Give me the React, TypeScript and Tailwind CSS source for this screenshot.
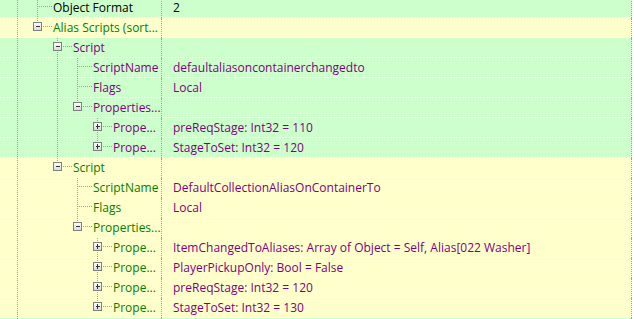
import React from 'react';

type Kind = 'leaf' | 'minus' | 'plus';

type Row = {
  label: string;
  value?: string;
  bg: 'green' | 'yellow';
  labelColor: string;
  valueColor?: string;
  x: number;
  kind: Kind;
  last?: boolean;
  lines: number[];
};

const PURPLE = 'text-[#800080]';
const GREEN = 'text-[#008000]';
const BLACK = 'text-black';

const rows: Row[] = [
  { label: 'Object Format', value: '2', bg: 'green', labelColor: BLACK, valueColor: BLACK, x: 37, kind: 'leaf', lines: [17] },
  { label: 'Alias Scripts (sort...', bg: 'yellow', labelColor: GREEN, x: 37, kind: 'minus', last: true, lines: [17] },
  { label: 'Script', bg: 'green', labelColor: PURPLE, x: 57, kind: 'minus', lines: [17] },
  { label: 'ScriptName', value: 'defaultaliasoncontainerchangedto', bg: 'green', labelColor: PURPLE, valueColor: PURPLE, x: 77, kind: 'leaf', lines: [17, 57] },
  { label: 'Flags', value: 'Local', bg: 'green', labelColor: PURPLE, valueColor: PURPLE, x: 77, kind: 'leaf', lines: [17, 57] },
  { label: 'Properties...', bg: 'green', labelColor: PURPLE, x: 77, kind: 'minus', last: true, lines: [17, 57] },
  { label: 'Prope...', value: 'preReqStage: Int32 = 110', bg: 'green', labelColor: PURPLE, valueColor: PURPLE, x: 97, kind: 'plus', lines: [17, 57] },
  { label: 'Prope...', value: 'StageToSet: Int32 = 120', bg: 'green', labelColor: PURPLE, valueColor: PURPLE, x: 97, kind: 'plus', last: true, lines: [17, 57] },
  { label: 'Script', bg: 'yellow', labelColor: GREEN, x: 57, kind: 'minus', last: true, lines: [17] },
  { label: 'ScriptName', value: 'DefaultCollectionAliasOnContainerTo', bg: 'yellow', labelColor: GREEN, valueColor: PURPLE, x: 77, kind: 'leaf', lines: [17] },
  { label: 'Flags', value: 'Local', bg: 'yellow', labelColor: GREEN, valueColor: PURPLE, x: 77, kind: 'leaf', lines: [17] },
  { label: 'Properties...', bg: 'yellow', labelColor: GREEN, x: 77, kind: 'minus', last: true, lines: [17] },
  { label: 'Prope...', value: 'ItemChangedToAliases: Array of Object = Self, Alias[022 Washer]', bg: 'yellow', labelColor: GREEN, valueColor: PURPLE, x: 97, kind: 'plus', lines: [17] },
  { label: 'Prope...', value: 'PlayerPickupOnly: Bool = False', bg: 'yellow', labelColor: GREEN, valueColor: PURPLE, x: 97, kind: 'plus', lines: [17] },
  { label: 'Prope...', value: 'preReqStage: Int32 = 120', bg: 'yellow', labelColor: GREEN, valueColor: PURPLE, x: 97, kind: 'plus', lines: [17] },
  { label: 'Prope...', value: 'StageToSet: Int32 = 130', bg: 'yellow', labelColor: GREEN, valueColor: PURPLE, x: 97, kind: 'plus', last: true, lines: [17] },
];

const DOT = '#a0a0a0';
const CY = 8.5;

function Connectors({ row }: { row: Row }) {
  const { x, kind, last, lines } = row;
  const hasBox = kind !== 'leaf';
  return (
    <svg width={x + 16} height={20} className="shrink-0" shapeRendering="crispEdges">
      {lines.map((l) => (
        <line key={l} x1={l + 0.5} y1={0} x2={l + 0.5} y2={20} stroke={DOT} strokeDasharray="1 1" />
      ))}
      <line x1={x + 0.5} y1={0} x2={x + 0.5} y2={last ? CY : 20} stroke={DOT} strokeDasharray="1 1" />
      <line x1={hasBox ? x + 6 : x + 2} y1={CY} x2={x + 15} y2={CY} stroke={DOT} strokeDasharray="1 1" />
      {hasBox && (
        <g>
          <defs>
            <linearGradient id="boxfill" x1="0" y1="0" x2="0" y2="1">
              <stop offset="0" stopColor="#ffffff" />
              <stop offset="1" stopColor="#d8d8d8" />
            </linearGradient>
          </defs>
          <rect x={x - 3.5} y={4.5} width={8} height={8} fill="url(#boxfill)" stroke="#7f7f7f" />
          <line x1={x - 1} y1={CY} x2={x + 3} y2={CY} stroke="#333333" />
          {kind === 'plus' && <line x1={x + 0.5} y1={6} x2={x + 0.5} y2={11} stroke="#333333" />}
        </g>
      )}
    </svg>
  );
}

function TreeRow({ row }: { row: Row }) {
  const bg = row.bg === 'green' ? 'bg-[#ccffcc]' : 'bg-[#ffffcc]';
  return (
    <div className={`flex h-[20px] w-[632px] ${bg}`}>
      <div className="flex w-[162px] shrink-0 border-r border-dotted border-[#a0a0a0] bg-[repeating-linear-gradient(90deg,#fff_0_2px,transparent_2px_3px)] bg-[length:100%_1px] bg-bottom bg-no-repeat">
        <Connectors row={row} />
        <span className={`h-[19px] whitespace-nowrap leading-[19px] ${row.labelColor}`}>{row.label}</span>
      </div>
      <div className="flex-1 border-r border-dotted border-[#a0a0a0] bg-[repeating-linear-gradient(90deg,#fff_0_2px,transparent_2px_3px)] bg-[length:100%_1px] bg-bottom bg-no-repeat">
        {row.value && (
          <span className={`ml-[11px] block h-[19px] whitespace-nowrap leading-[19px] ${row.valueColor}`}>{row.value}</span>
        )}
      </div>
    </div>
  );
}

export default function App() {
  const tail: Row = { label: '', bg: 'green', labelColor: BLACK, x: 17, kind: 'leaf', lines: [] };
  return (
    <div className="h-[319px] w-[634px] overflow-hidden bg-white font-['Open_Sans',sans-serif] text-[12px]">
      <div className="-mt-[2px]">
        {rows.map((row, i) => (
          <TreeRow key={i} row={row} />
        ))}
        <TreeRow row={tail} />
      </div>
    </div>
  );
}
